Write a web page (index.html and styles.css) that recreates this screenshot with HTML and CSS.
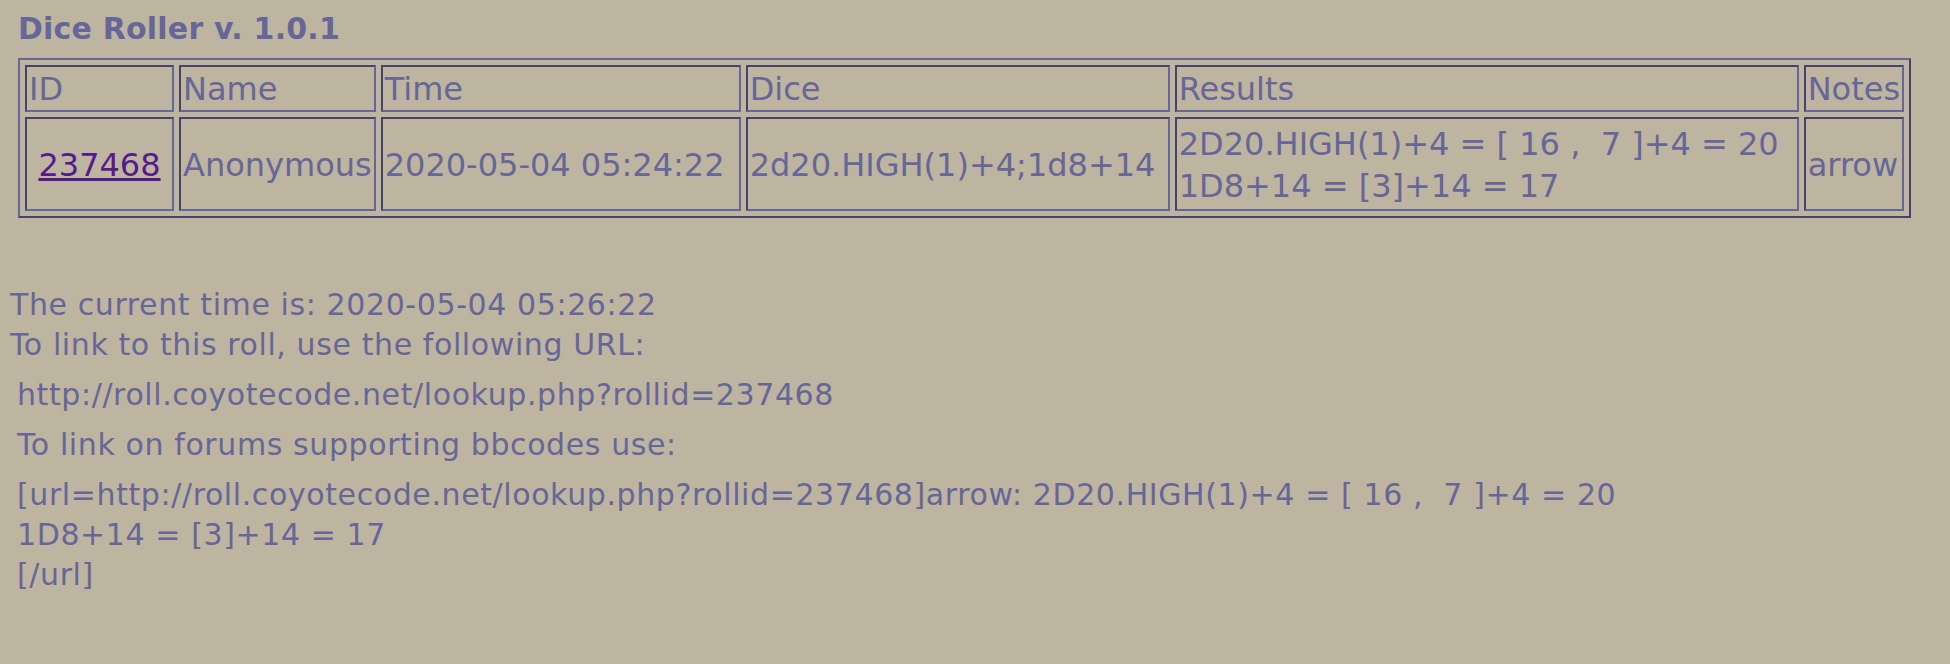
FILE: index.html
```
<!DOCTYPE html>
<html lang="en">
<head>
    <meta charset="UTF-8">
    <title>Dice Roller</title>
    <link rel="stylesheet" href="styles.css">
</head>
<body>
    <div class="roller">
        <h1 class="title">Dice Roller v. 1.0.1</h1>
        <table class="rolls">
            <tr class="head-row">
                <th class="col-id">ID</th>
                <th class="col-name">Name</th>
                <th class="col-time">Time</th>
                <th class="col-dice">Dice</th>
                <th class="col-results">Results</th>
                <th class="col-notes">Notes</th>
            </tr>
            <tr class="roll-row">
                <td class="roll-id"><a href="#" class="roll-link">237468</a></td>
                <td>Anonymous</td>
                <td>2020-05-04 05:24:22</td>
                <td>2d20.HIGH(1)+4;1d8+14</td>
                <td>2D20.HIGH(1)+4 = [ 16 , &nbsp;7 ]+4 = 20<br>1D8+14 = [3]+14 = 17</td>
                <td>arrow</td>
            </tr>
        </table>
    </div>

    <div class="info">
        <div class="intro">
            The current time is: 2020-05-04 05:26:22<br>
            To link to this roll, use the following URL:
        </div>
        <div class="links">
            <div class="link-row">http://roll.coyotecode.net/lookup.php?rollid=237468</div>
            <div class="link-row">To link on forums supporting bbcodes use:</div>
            <div class="link-row">[url=http://roll.coyotecode.net/lookup.php?rollid=237468]arrow: 2D20.HIGH(1)+4 = [ 16 , &nbsp;7 ]+4 = 20<br>1D8+14 = [3]+14 = 17<br>[/url]</div>
        </div>
    </div>
</body>
</html>
```

FILE: styles.css
```
body {
    margin: 0;
    padding: 0 10px;
    background-color: #bdb5a0;
    color: #666699;
    font-family: "DejaVu Sans", Verdana, sans-serif;
    font-size: 30px;
}

.roller {
    padding-left: 8px;
}

.title {
    margin: 11px 0 12px;
    font-size: 30px;
    font-weight: bold;
    letter-spacing: 0.2px;
    line-height: normal;
}

.rolls {
    border-collapse: separate;
    border-spacing: 5px;
    border: 2px solid;
    border-color: #666699 #44446a #44446a #666699;
    font-size: 32px;
}

.rolls th,
.rolls td {
    box-sizing: border-box;
    border: 2px solid;
    border-color: #44446a #666699 #666699 #44446a;
    white-space: nowrap;
    text-align: left;
    font-weight: normal;
}

.head-row th {
    padding: 2px 2px 0;
    line-height: 41px;
}

.roll-row td {
    padding: 4px 2px 2px;
    line-height: 42px;
    vertical-align: middle;
}

.col-id { width: 149px; }
.col-name { width: 194px; }
.col-time { width: 360px; }
.col-dice { width: 424px; }
.col-results { width: 624px; }
.col-notes { width: 100px; }

.rolls td.roll-id {
    text-align: center;
}

.roll-link {
    color: #551a8b;
}

.info {
    margin-top: 67px;
    letter-spacing: 0.6px;
    line-height: 40px;
}

.links {
    display: flex;
    flex-direction: column;
    gap: 10px;
    margin-top: 10px;
    padding-left: 7px;
}
```
